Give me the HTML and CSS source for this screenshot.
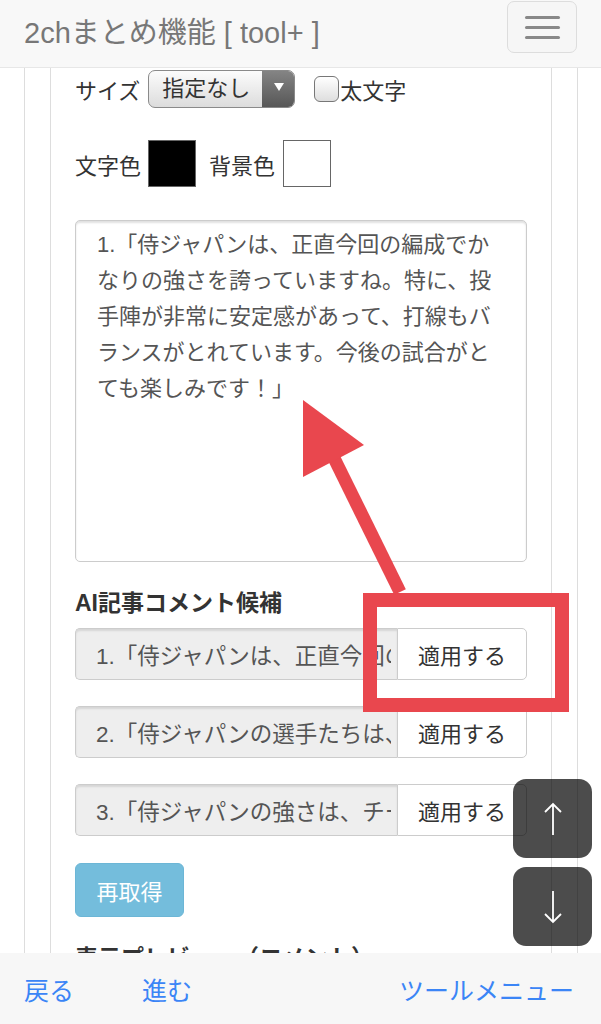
FILE: index.html
```html
<!DOCTYPE html>
<html lang="ja">
<head>
  <meta charset="UTF-8">
  <meta name="viewport" content="width=device-width, initial-scale=1.0">
  <title>2chまとめ機能 [ tool+ ]</title>
  <link rel="stylesheet" href="styles.css">
</head>
<body>
  <div class="navbar">
    <span class="brand">2chまとめ機能 [ tool+ ]</span>
    <button class="toggle" type="button">
      <span class="bar"></span>
      <span class="bar"></span>
      <span class="bar"></span>
    </button>
  </div>

  <div class="outer">
    <div class="inner">
      <div class="font-row">
        <span class="label">サイズ</span>
        <div class="select">
          <span class="select-value">指定なし</span>
          <span class="select-arrow"></span>
        </div>
        <label class="check"><span class="checkbox"></span>太文字</label>
      </div>

      <div class="color-row">
        <span class="label">文字色</span>
        <span class="swatch swatch-black"></span>
        <span class="label label-bg">背景色</span>
        <span class="swatch swatch-white"></span>
      </div>

      <textarea class="comment-box">1.「侍ジャパンは、正直今回の編成でかなりの強さを誇っていますね。特に、投手陣が非常に安定感があって、打線もバランスがとれています。今後の試合がとても楽しみです！」</textarea>

      <h4 class="section-title">AI記事コメント候補</h4>

      <div class="input-group">
        <input type="text" readonly value="1.「侍ジャパンは、正直今回の編成でかなりの強さを誇っていますね。">
        <button type="button">適用する</button>
      </div>
      <div class="input-group">
        <input type="text" readonly value="2.「侍ジャパンの選手たちは、それぞれの役割をしっかり果たしていますね。">
        <button type="button">適用する</button>
      </div>
      <div class="input-group">
        <input type="text" readonly value="3.「侍ジャパンの強さは、チーム全体のまとまりにあると思います。">
        <button type="button">適用する</button>
      </div>

      <button class="btn-info" type="button">再取得</button>

      <h4 class="section-title preview-title">表示プレビュー（コメント）</h4>
    </div>
  </div>

  <!-- 注釈 -->
  <svg class="annotation" width="601" height="1024" viewBox="0 0 601 1024">
    <rect x="370" y="600" width="192" height="105" fill="none" stroke="#e9474e" stroke-width="14"/>
    <line x1="400" y1="592" x2="333" y2="456" stroke="#e9474e" stroke-width="13"/>
    <polygon points="303,400 303,477 364,445" fill="#e9474e"/>
  </svg>

  <div class="scroll-buttons">
    <button class="scroll-btn" type="button">
      <svg width="20" height="34" viewBox="0 0 20 34"><path d="M10 2V33M2 10L10 2L18 10" fill="none" stroke="#fff" stroke-width="1.8"/></svg>
    </button>
    <button class="scroll-btn" type="button">
      <svg width="20" height="34" viewBox="0 0 20 34"><path d="M10 1V32M2 24L10 32L18 24" fill="none" stroke="#fff" stroke-width="1.8"/></svg>
    </button>
  </div>

  <div class="toolbar">
    <a href="#">戻る</a>
    <a href="#" class="forward">進む</a>
    <a href="#" class="menu">ツールメニュー</a>
  </div>
</body>
</html>
```

FILE: styles.css
```css
body {
  font-family: "Liberation Sans", "Noto Sans CJK JP", sans-serif;
  margin: 0;
  padding: 0;
  height: 1024px;
  overflow: hidden;
  position: relative;
  background-color: #fff;
  color: #333;
  font-size: 22px;
}

.navbar {
  height: 67px;
  border-bottom: 1px solid #e7e7e7;
  background-color: #f8f8f8;
  padding: 0 24px;
  display: flex;
  justify-content: space-between;
  align-items: flex-start;
}

.brand {
  font-size: 29px;
  line-height: 66px;
  color: #777;
}

.toggle {
  margin-top: 1px;
  width: 70px;
  height: 52px;
  border: 1px solid #ddd;
  border-radius: 7px;
  background-color: #f6f6f6;
  display: flex;
  flex-direction: column;
  justify-content: center;
  align-items: center;
  gap: 7px;
  padding: 0;
}

.toggle .bar {
  display: block;
  width: 35px;
  height: 3px;
  border-radius: 2px;
  background-color: #888;
}

.outer {
  margin: 0 23px 0 24px;
  padding: 0 25px;
  border-left: 1px solid #ddd;
  border-right: 1px solid #ddd;
}

.inner {
  border-left: 1px solid #ddd;
  border-right: 1px solid #ddd;
  padding: 2px 24px 40px 24px;
}

.label {
  color: #333;
  white-space: nowrap;
}

.font-row {
  display: flex;
  align-items: center;
  height: 38px;
}

.select {
  margin-left: 8px;
  width: 145px;
  height: 36px;
  border: 1px solid #8a8a8a;
  border-radius: 7px;
  background: linear-gradient(#fcfcfc, #dcdcdc);
  display: flex;
  overflow: hidden;
}

.select-value {
  flex: 1;
  padding-left: 13px;
  line-height: 36px;
  color: #333;
}

.select-arrow {
  width: 32px;
  background: linear-gradient(#848484, #575757);
  position: relative;
}

.select-arrow::after {
  content: "";
  position: absolute;
  left: 12px;
  top: 12px;
  border-left: 5px solid transparent;
  border-right: 5px solid transparent;
  border-top: 8px solid #fff;
}

.check {
  margin-left: 19px;
  display: flex;
  align-items: center;
}

.checkbox {
  width: 23px;
  height: 24px;
  border: 1px solid #777;
  border-radius: 6px;
  background: linear-gradient(#fff, #dedede);
  margin-right: 1px;
}

.color-row {
  margin-top: 32px;
  display: flex;
  align-items: center;
  height: 47px;
}

.swatch {
  width: 46px;
  height: 45px;
  border: 1px solid #666;
  margin-left: 7px;
}

.swatch-black {
  background-color: #000;
}

.swatch-white {
  background-color: #fff;
  margin-left: 8px;
}

.label-bg {
  margin-left: 13px;
}

.comment-box {
  display: block;
  margin-top: 33px;
  width: 100%;
  height: 342px;
  box-sizing: border-box;
  border: 1px solid #ccc;
  border-radius: 5px;
  box-shadow: inset 0 2px 2px rgba(0, 0, 0, 0.12);
  padding: 6px 22px 6px 21px;
  font-family: "Liberation Sans", "Noto Sans CJK JP", sans-serif;
  font-size: 22px;
  line-height: 36px;
  color: #555;
  resize: none;
  overflow: hidden;
}

.section-title {
  margin: 26px 0 10px 0;
  font-size: 23px;
  line-height: 30px;
  font-weight: bold;
  color: #333;
}

.input-group {
  display: flex;
  height: 52px;
  margin-bottom: 26px;
}

.input-group input {
  flex: 1;
  min-width: 0;
  box-sizing: border-box;
  height: 52px;
  border: 1px solid #ccc;
  border-right: none;
  border-radius: 5px 0 0 5px;
  background-color: #eee;
  box-shadow: inset 0 2px 2px rgba(0, 0, 0, 0.1);
  padding: 0 6px 0 20px;
  font-family: "Liberation Sans", "Noto Sans CJK JP", sans-serif;
  font-size: 22.5px;
  color: #555;
}

.input-group button {
  width: 130px;
  height: 52px;
  border: 1px solid #ccc;
  border-radius: 0 5px 5px 0;
  background-color: #fff;
  font-family: "Liberation Sans", "Noto Sans CJK JP", sans-serif;
  font-size: 22px;
  color: #333;
  padding: 0;
}

.btn-info {
  margin-top: 1px;
  width: 109px;
  height: 54px;
  border: 1px solid #6cb6d6;
  border-radius: 6px;
  background-color: #74bddc;
  color: #fff;
  font-family: "Liberation Sans", "Noto Sans CJK JP", sans-serif;
  font-size: 22px;
  padding: 0;
}

.preview-title {
  margin-top: 26px;
}

.annotation {
  position: absolute;
  top: 0;
  left: 0;
  pointer-events: none;
}

.scroll-buttons {
  position: fixed;
  right: 9px;
  bottom: 78px;
  display: flex;
  flex-direction: column;
  gap: 9px;
}

.scroll-btn {
  width: 79px;
  height: 79px;
  border: none;
  border-radius: 13px;
  background-color: rgba(0, 0, 0, 0.7);
  display: flex;
  justify-content: center;
  align-items: center;
  padding: 0;
}

.toolbar {
  position: fixed;
  left: 0;
  right: 0;
  bottom: 0;
  height: 71px;
  background-color: #f7f7f7;
  display: flex;
  align-items: center;
  padding: 0 27px 0 24px;
  font-family: "Noto Sans CJK JP", sans-serif;
  font-size: 25px;
}

.toolbar a {
  color: #3b85f6;
  text-decoration: none;
}

.toolbar .forward {
  margin-left: 68px;
}

.toolbar .menu {
  margin-left: auto;
}
```
